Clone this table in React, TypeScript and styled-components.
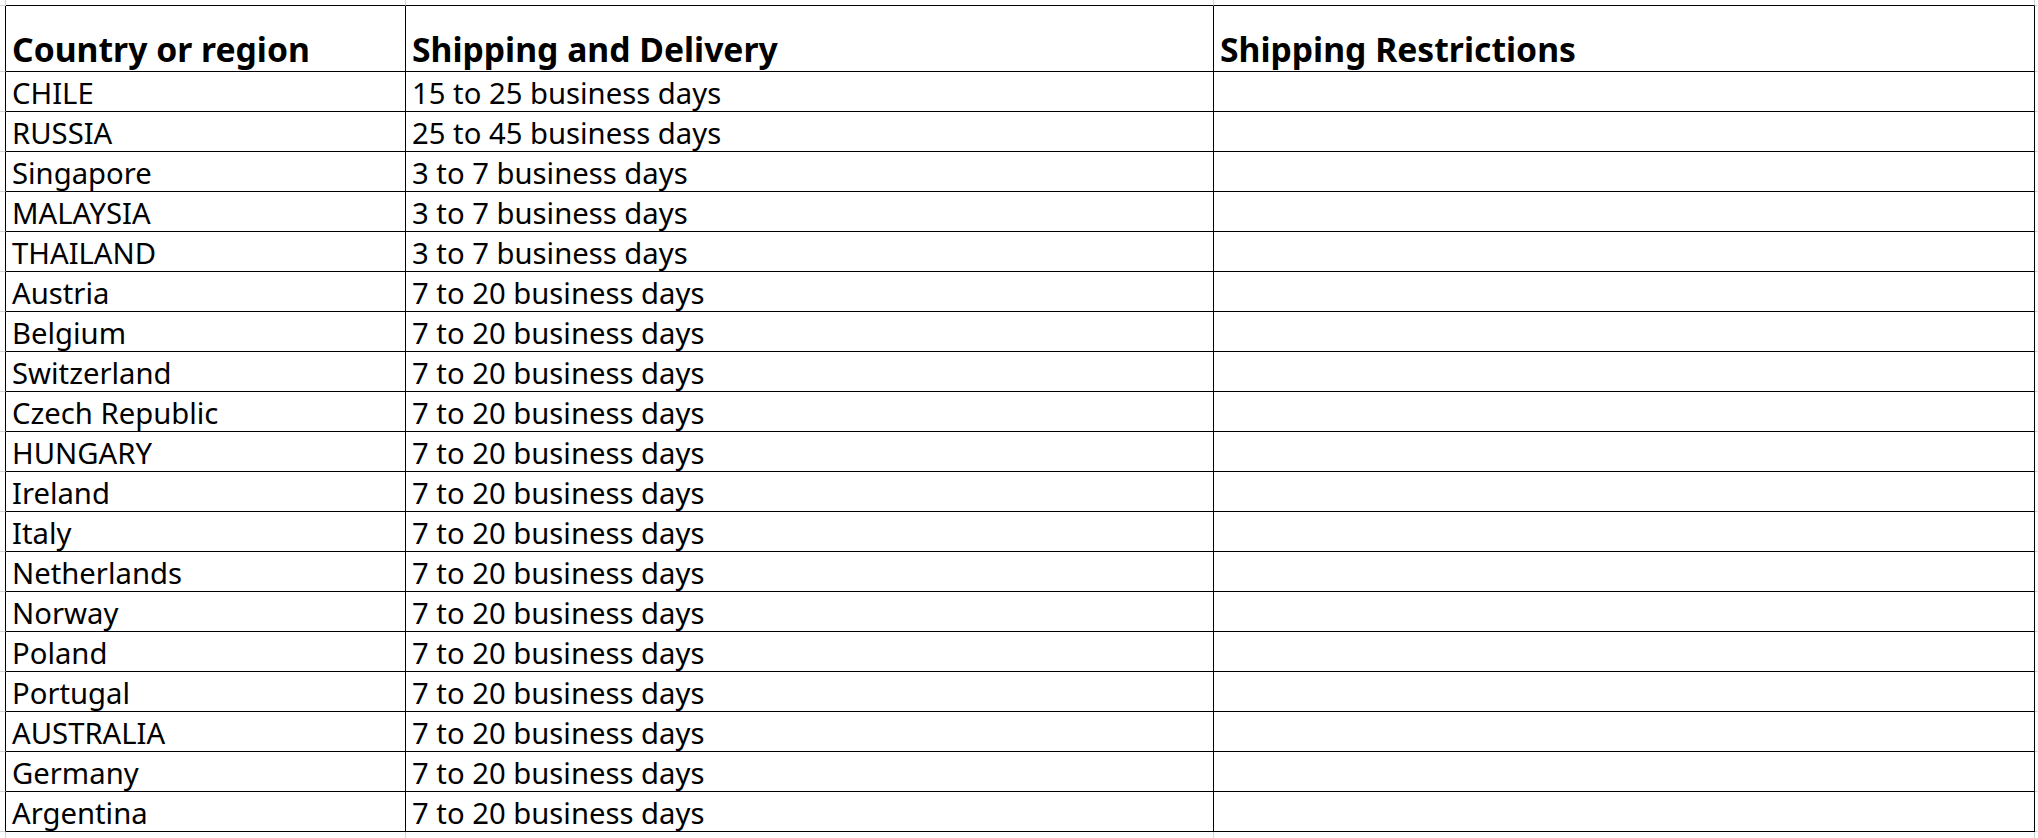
import * as React from "react"
import styled, { createGlobalStyle } from "styled-components"

const GlobalStyle = createGlobalStyle`
    html, body {
        margin: 0;
        padding: 0;
        background: #ffffff;
    }
    body {
        width: 2038px;
        height: 838px;
        overflow: hidden;
    }
`;

const GRID = "#d4d4d4";
const INK = "#000000";

const Sheet = styled.div`
    display: grid;
    grid-template-columns: 6px 400px 808px 821px 3px;
    grid-template-rows: 6px 66px repeat(19, 40px) 7px;
    font-family: "Noto Sans", "Open Sans", sans-serif;
    color: #000;
`;

type CellProps = { right?: string; bottom?: string; bold?: boolean }

const Cell = styled.div<CellProps>`
    box-sizing: border-box;
    display: flex;
    align-items: flex-end;
    padding: 0 6px ${props => props.bold ? "4px" : "3px"} 6px;
    border-right: 1px solid ${props => props.right || "transparent"};
    border-bottom: 1px solid ${props => props.bottom || "transparent"};
    font-size: ${props => props.bold ? "33.7px" : "29.25px"};
    font-weight: ${props => props.bold ? 700 : 400};
    line-height: 1;
    white-space: nowrap;
    overflow: hidden;
`;

const Margin = styled.div<{ right?: string; bottom?: string }>`
    box-sizing: border-box;
    border-right: 1px solid ${props => props.right || "transparent"};
    border-bottom: 1px solid ${props => props.bottom || "transparent"};
`;

const headers = ["Country or region", "Shipping and Delivery", "Shipping Restrictions"];

const rows: [string, string][] = [
    ["CHILE", "15 to 25 business days"],
    ["RUSSIA", "25 to 45 business days"],
    ["Singapore", "3 to 7 business days"],
    ["MALAYSIA", "3 to 7 business days"],
    ["THAILAND", "3 to 7 business days"],
    ["Austria", "7 to 20 business days"],
    ["Belgium", "7 to 20 business days"],
    ["Switzerland", "7 to 20 business days"],
    ["Czech Republic", "7 to 20 business days"],
    ["HUNGARY", "7 to 20 business days"],
    ["Ireland", "7 to 20 business days"],
    ["Italy", "7 to 20 business days"],
    ["Netherlands", "7 to 20 business days"],
    ["Norway", "7 to 20 business days"],
    ["Poland", "7 to 20 business days"],
    ["Portugal", "7 to 20 business days"],
    ["AUSTRALIA", "7 to 20 business days"],
    ["Germany", "7 to 20 business days"],
    ["Argentina", "7 to 20 business days"],
];

const App = () => {
    return (
        <>
            <GlobalStyle />
            <Sheet>
                {/* top gutter */}
                <Margin right={GRID} bottom={GRID} />
                <Margin right={GRID} bottom={INK} />
                <Margin right={GRID} bottom={INK} />
                <Margin right={GRID} bottom={INK} />
                <Margin bottom={GRID} />

                {/* header */}
                <Margin right={INK} bottom={GRID} />
                {headers.map(h => (
                    <Cell key={h} bold right={INK} bottom={INK}>{h}</Cell>
                ))}
                <Margin bottom={GRID} />

                {rows.map(([country, days]) => (
                    <React.Fragment key={country}>
                        <Margin right={INK} bottom={GRID} />
                        <Cell right={INK} bottom={INK}>{country}</Cell>
                        <Cell right={INK} bottom={INK}>{days}</Cell>
                        <Cell right={INK} bottom={INK}></Cell>
                        <Margin bottom={GRID} />
                    </React.Fragment>
                ))}

                {/* bottom gutter */}
                <Margin right={GRID} />
                <Margin right={GRID} />
                <Margin right={GRID} />
                <Margin right={GRID} />
                <Margin />
            </Sheet>
        </>
    )
}

export default App;
